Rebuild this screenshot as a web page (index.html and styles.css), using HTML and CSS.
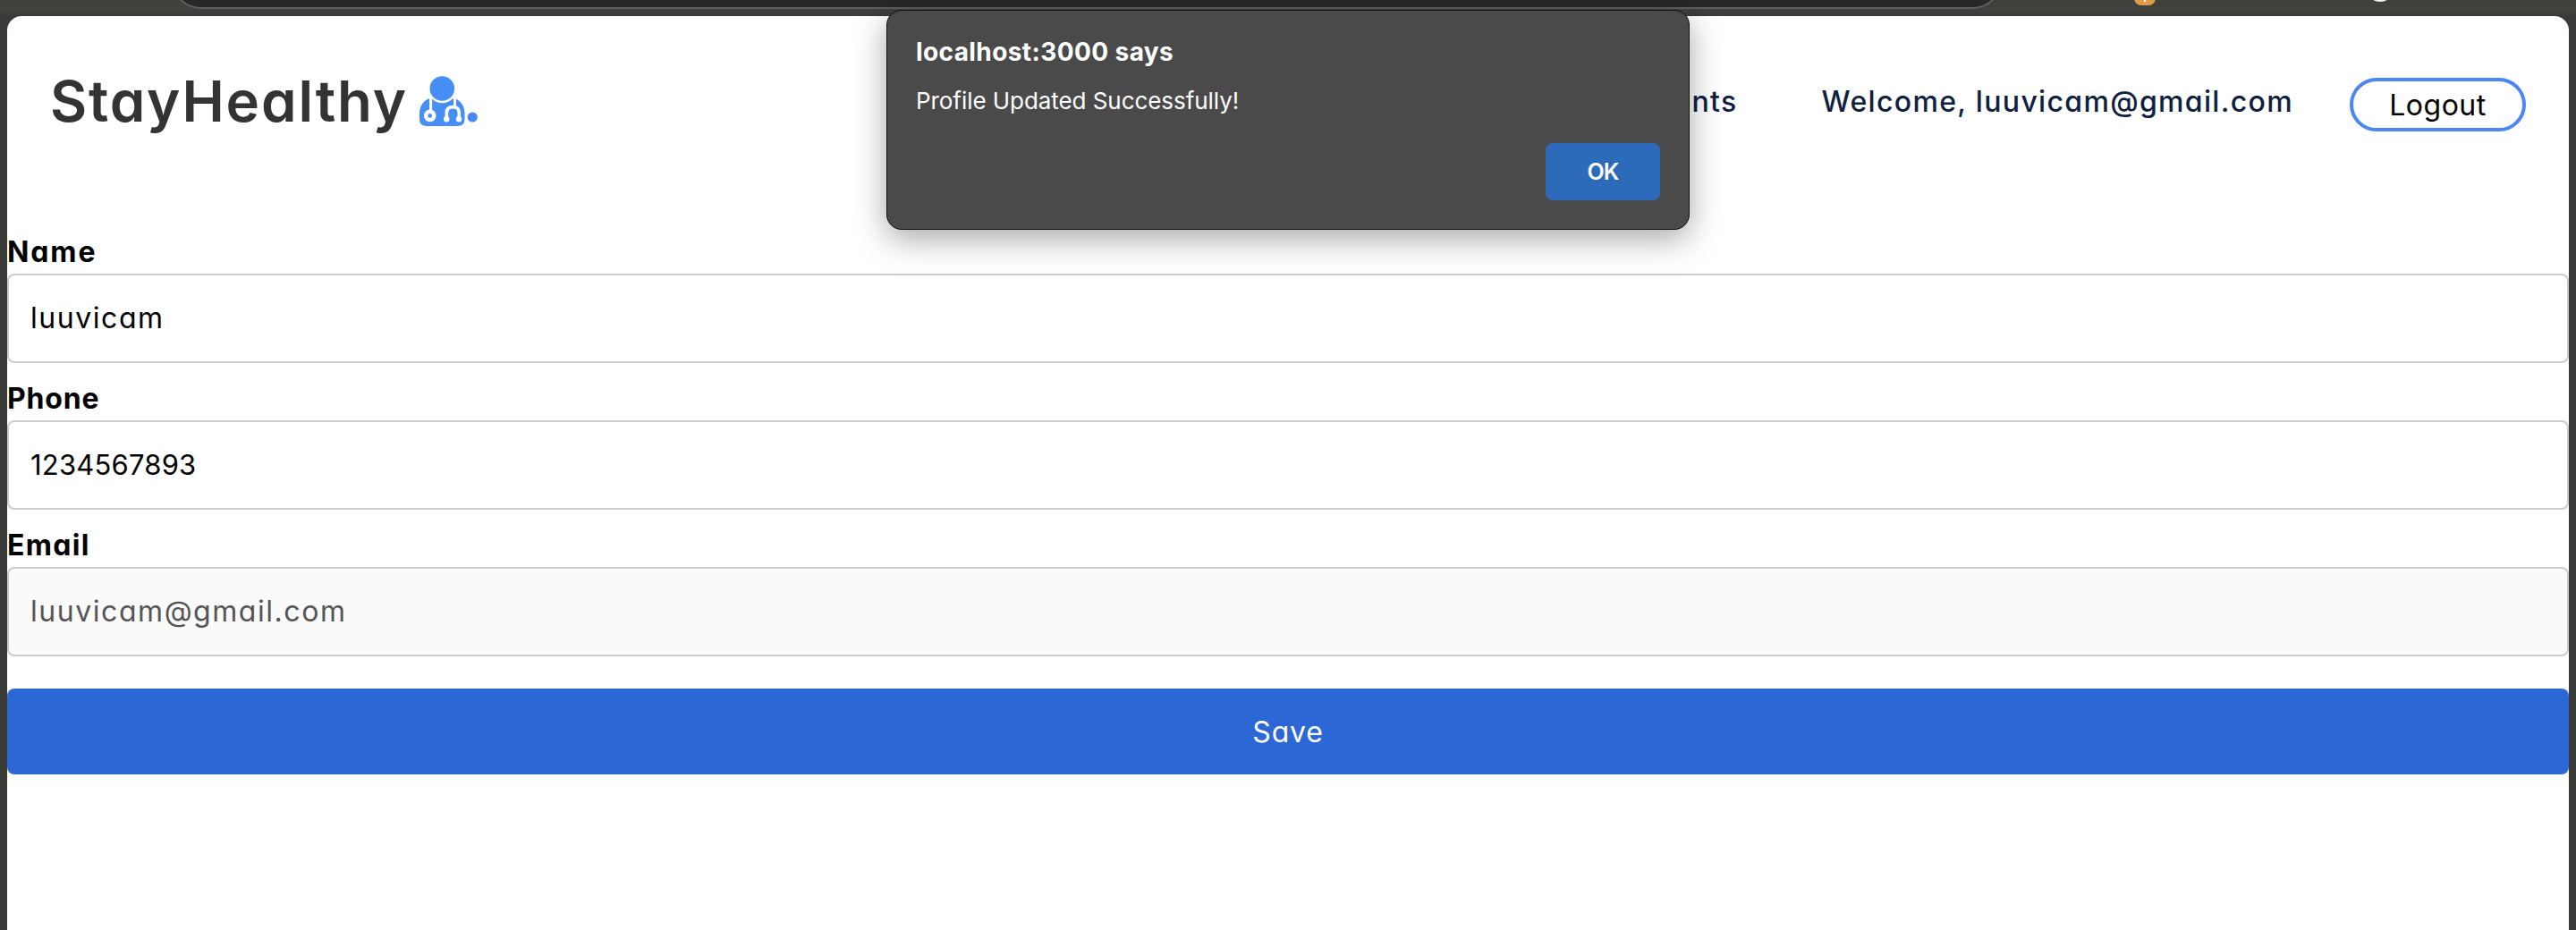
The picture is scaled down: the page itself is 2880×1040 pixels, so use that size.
FILE: index.html
```html
<!DOCTYPE html>
<html lang="en">
<head>
<meta charset="utf-8">
<title>StayHealthy - Profile</title>
<link rel="stylesheet" href="styles.css">
</head>
<body>
<div class="toolbar">
  <div class="address-bar"></div>
  <div class="extension"><span class="extension-mark"></span></div>
  <div class="avatar"></div>
</div>
<div class="page">
  <header class="header">
    <div class="brand">
      <span class="brand-name">StayHealthy</span>
      <svg class="doctor" viewBox="0 0 66 56" width="66" height="56" aria-hidden="true">
        <path fill="#468ff7" d="M10 25.5C3.500 28.500 0 34.500 0 42V48Q0 56 8 56H42.500Q50.500 56 50.500 48V42C50.500 34.500 47 28.500 40.500 25.500Z"/>
        <circle cx="25.300" cy="14" r="16.200" fill="#fff"/>
        <circle cx="25.300" cy="14" r="13.800" fill="#468ff7"/>
        <g fill="none" stroke="#fff" stroke-width="3">
          <path d="M12.600 24V39"/>
          <path d="M39.500 24V34"/>
          <path stroke-width="3.600" d="M30.300 48V41.500Q30.300 34.600 37.300 34.600Q44.300 34.600 44.300 41.500V48"/>
        </g>
        <circle cx="11.700" cy="44.400" r="6.800" fill="#fff"/>
        <circle cx="11.700" cy="44.400" r="2.400" fill="#468ff7"/>
        <circle cx="30.200" cy="48.300" r="3.200" fill="#fff"/>
        <circle cx="44" cy="48.300" r="3.200" fill="#fff"/>
        <circle cx="59.300" cy="46" r="5.600" fill="#4b86f5"/>
      </svg>
    </div>
    <nav class="nav">
      <a class="link">Appointments</a>
      <span class="link">Welcome, luuvicam@gmail.com</span>
      <button class="logout">Logout</button>
    </nav>
  </header>
  <form class="form">
    <div class="field">
      <label class="label label-name">Name</label>
      <div class="input">luuvicam</div>
    </div>
    <div class="field">
      <label class="label label-phone">Phone</label>
      <div class="input input-digits">1234567893</div>
    </div>
    <div class="field">
      <label class="label label-email">Email</label>
      <div class="input input-disabled">luuvicam@gmail.com</div>
    </div>
    <button class="save" type="button">Save</button>
  </form>
</div>
<div class="alert" role="alertdialog">
  <div class="alert-title">localhost:3000 says</div>
  <div class="alert-message">Profile Updated Successfully!</div>
  <button class="alert-ok">OK</button>
</div>
</body>
</html>
```
FILE: styles.css
```css
* { box-sizing: border-box; }

body {
  margin: 0;
  height: 1040px;
  overflow: hidden;
  position: relative;
  display: flex;
  flex-direction: column;
  background: #3a3a39;
  font-family: Inter, "Open Sans", sans-serif;
  font-size: 32px;
  color: #000;
}

button { font-family: inherit; margin: 0; }

.toolbar {
  flex: none;
  height: 18px;
  padding-left: 191px;
  display: flex;
  align-items: flex-start;
  overflow: hidden;
  background: linear-gradient(#40403d 12px, #3a3a38);
}

.address-bar {
  flex: none;
  width: 2048px;
  height: 68px;
  margin-top: -58px;
  border: 2px solid #606060;
  border-radius: 34px;
  background: #272727;
}

.extension {
  flex: none;
  width: 24px;
  height: 16px;
  margin: -10px 0 0 147px;
  padding: 8px 0 0 11px;
  border-radius: 8px;
  background: #e09a48;
}

.extension-mark {
  display: block;
  width: 2px;
  height: 4px;
  background: #fff;
}

.avatar {
  flex: none;
  width: 32px;
  height: 32px;
  margin: -30px 0 0 235px;
  border-radius: 50%;
  background: #f0f2f5;
}

.page {
  flex: 1;
  margin: 0 8px;
  background: #fff;
  border-radius: 16px 16px 0 0;
  font-feature-settings: "cv11";
}

.header {
  height: 190px;
  padding: 0 48px;
  display: flex;
  align-items: center;
  justify-content: space-between;
}

.brand { display: flex; align-items: center; }

.brand-name {
  margin-right: 13px;
  font-size: 63.5px;
  font-weight: 600;
  line-height: 96px;
  letter-spacing: 1.8px;
  color: #333;
}

.doctor { display: block; }

.nav {
  display: flex;
  align-items: center;
}

.link {
  margin-right: 94px;
  padding-top: 2px;
  line-height: 48px;
  font-weight: 500;
  letter-spacing: 1.33px;
  color: #0f2140;
}

.link + .link { margin-right: 63px; }

.logout {
  width: 197px;
  height: 60px;
  margin-top: 8px;
  padding: 0;
  border: 4px solid #4c85f6;
  border-radius: 30px;
  background: #fff;
  font-size: 32px;
  letter-spacing: 0.5px;
  color: #000;
  font-feature-settings: inherit;
}

.form {
  padding-top: 50px;
  display: flex;
  flex-direction: column;
  gap: 16px;
}

.field { display: flex; flex-direction: column; }

.label {
  height: 48px;
  line-height: 48px;
  font-weight: 700;
  letter-spacing: 1.3px;
}

.label-name { letter-spacing: 1.9px; }
.label-phone { letter-spacing: 0.8px; }

.input {
  height: 100px;
  padding: 0 24px;
  border: 2px solid #ccc;
  border-radius: 8px;
  line-height: 96px;
  letter-spacing: 1.55px;
}

.input-digits { font-size: 31px; letter-spacing: 0.2px; }

.input-disabled {
  background: #fafafa;
  color: #555;
}

.save {
  height: 96px;
  margin-top: 20px;
  border: 0;
  border-radius: 8px;
  background: #2b68d6;
  font-size: 32px;
  letter-spacing: 0.8px;
  color: #fff;
  font-feature-settings: inherit;
}

.alert {
  position: absolute;
  left: 991px;
  top: 11px;
  width: 898px;
  height: 246px;
  padding: 30px 32px 32px;
  display: flex;
  flex-direction: column;
  border: 1px solid #111;
  border-radius: 17px;
  background: #4a4a4a;
  box-shadow: 0 10px 36px rgba(0, 0, 0, 0.35);
  color: #fff;
}

.alert-title {
  font-size: 28px;
  font-weight: 700;
  line-height: 32px;
  letter-spacing: 0.4px;
}

.alert-message {
  margin-top: 22px;
  font-size: 26px;
  line-height: 34px;
  letter-spacing: -0.06px;
}

.alert-ok {
  width: 128px;
  height: 64px;
  margin-top: auto;
  padding: 0;
  align-self: flex-end;
  border: 0;
  border-radius: 8px;
  background: #2c6aba;
  font-size: 25px;
  font-weight: 600;
  letter-spacing: -1px;
  color: #fff;
}
```
